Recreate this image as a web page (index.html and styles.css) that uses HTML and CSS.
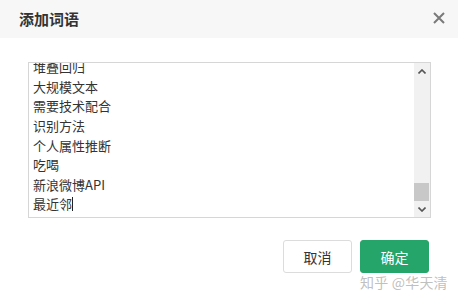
FILE: index.html
```html
<!DOCTYPE html>
<html lang="zh-CN">
<head>
<meta charset="utf-8">
<title>添加词语</title>
<link rel="stylesheet" href="styles.css">
</head>
<body>
<div class="dialog">
  <div class="header">
    <div class="title">添加词语</div>
    <svg class="close" width="12" height="12" viewBox="0 0 12 12"><path d="M1 1L11 11M11 1L1 11" stroke="#7a7a7a" stroke-width="2" fill="none"/></svg>
  </div>
  <div class="body">
    <div class="textbox">
      <div class="lines">
        <div class="line">堆叠回归</div>
        <div class="line">大规模文本</div>
        <div class="line">需要技术配合</div>
        <div class="line">识别方法</div>
        <div class="line">个人属性推断</div>
        <div class="line">吃喝</div>
        <div class="line">新浪微博API</div>
        <div class="line">最近邻<span class="caret"></span></div>
      </div>
      <div class="scrollbar">
        <div class="sb-btn"><svg width="8" height="5" viewBox="0 0 8 5"><path d="M0.5 4.5L4 1L7.5 4.5" stroke="#555" stroke-width="1.6" fill="none"/></svg></div>
        <div class="sb-track"><div class="sb-thumb"></div></div>
        <div class="sb-btn"><svg width="8" height="5" viewBox="0 0 8 5"><path d="M0.5 0.5L4 4L7.5 0.5" stroke="#555" stroke-width="1.6" fill="none"/></svg></div>
      </div>
    </div>
  </div>
  <div class="footer">
    <button class="btn btn-default">取消</button>
    <button class="btn btn-primary">确定</button>
    <div class="watermark">知乎 @华天清</div>
  </div>
</div>
</body>
</html>
```
FILE: styles.css
```css
html, body {
  margin: 0;
  padding: 0;
  background: #fff;
}
body {
  width: 458px;
  height: 300px;
  overflow: hidden;
  font-family: "Noto Sans CJK SC", "Microsoft YaHei", sans-serif;
  color: #333;
}
.dialog {
  width: 458px;
  height: 300px;
  display: flex;
  flex-direction: column;
  position: relative;
}
.header {
  height: 38px;
  background: #f7f7f7;
  display: flex;
  align-items: center;
  justify-content: space-between;
  padding: 0 13px 0 19px;
}
.title {
  font-size: 15px;
  font-weight: bold;
  line-height: 20px;
  color: #333;
}
.close {
  display: block;
  margin-top: -2px;
}
.body {
  padding: 24px 27px 0 28px;
}
.textbox {
  height: 154px;
  border: 1px solid #d6d6d6;
  display: flex;
}
.lines {
  flex: 1;
  overflow: hidden;
  display: flex;
  flex-direction: column;
  justify-content: flex-end;
  padding: 0 4px 3px 4px;
  font-size: 13px;
  line-height: 19.6px;
  color: #333;
}
.line {
  white-space: nowrap;
  flex-shrink: 0;
}
.caret {
  display: inline-block;
  width: 1px;
  height: 14px;
  background: #222;
  vertical-align: -2px;
}
.scrollbar {
  width: 16px;
  background: #f1f1f1;
  display: flex;
  flex-direction: column;
}
.sb-btn {
  height: 16px;
  display: flex;
  align-items: center;
  justify-content: center;
}
.sb-btn svg {
  display: block;
}
.sb-track {
  flex: 1;
  display: flex;
  flex-direction: column;
  justify-content: flex-end;
}
.sb-thumb {
  height: 18px;
  margin: 0 1px 0 0;
  background: #c8c8c8;
}
.footer {
  display: flex;
  justify-content: flex-end;
  gap: 8px;
  padding: 22px 29px 0 0;
  position: relative;
}
.btn {
  box-sizing: border-box;
  height: 33px;
  width: 69px;
  border-radius: 3px;
  font-family: "Noto Sans CJK SC", "Microsoft YaHei", sans-serif;
  font-size: 14px;
  line-height: 20px;
  padding: 0;
  cursor: pointer;
}
.btn-default {
  background: #fff;
  border: 1px solid #dcdcdc;
  color: #333;
}
.btn-primary {
  background: #26a56a;
  border: 1px solid #26a56a;
  color: #fff;
}
.watermark {
  position: absolute;
  left: 360px;
  top: 56px;
  font-size: 14px;
  line-height: 16px;
  color: rgba(175, 175, 175, 0.8);
  white-space: nowrap;
  letter-spacing: 0.2px;
}
```
